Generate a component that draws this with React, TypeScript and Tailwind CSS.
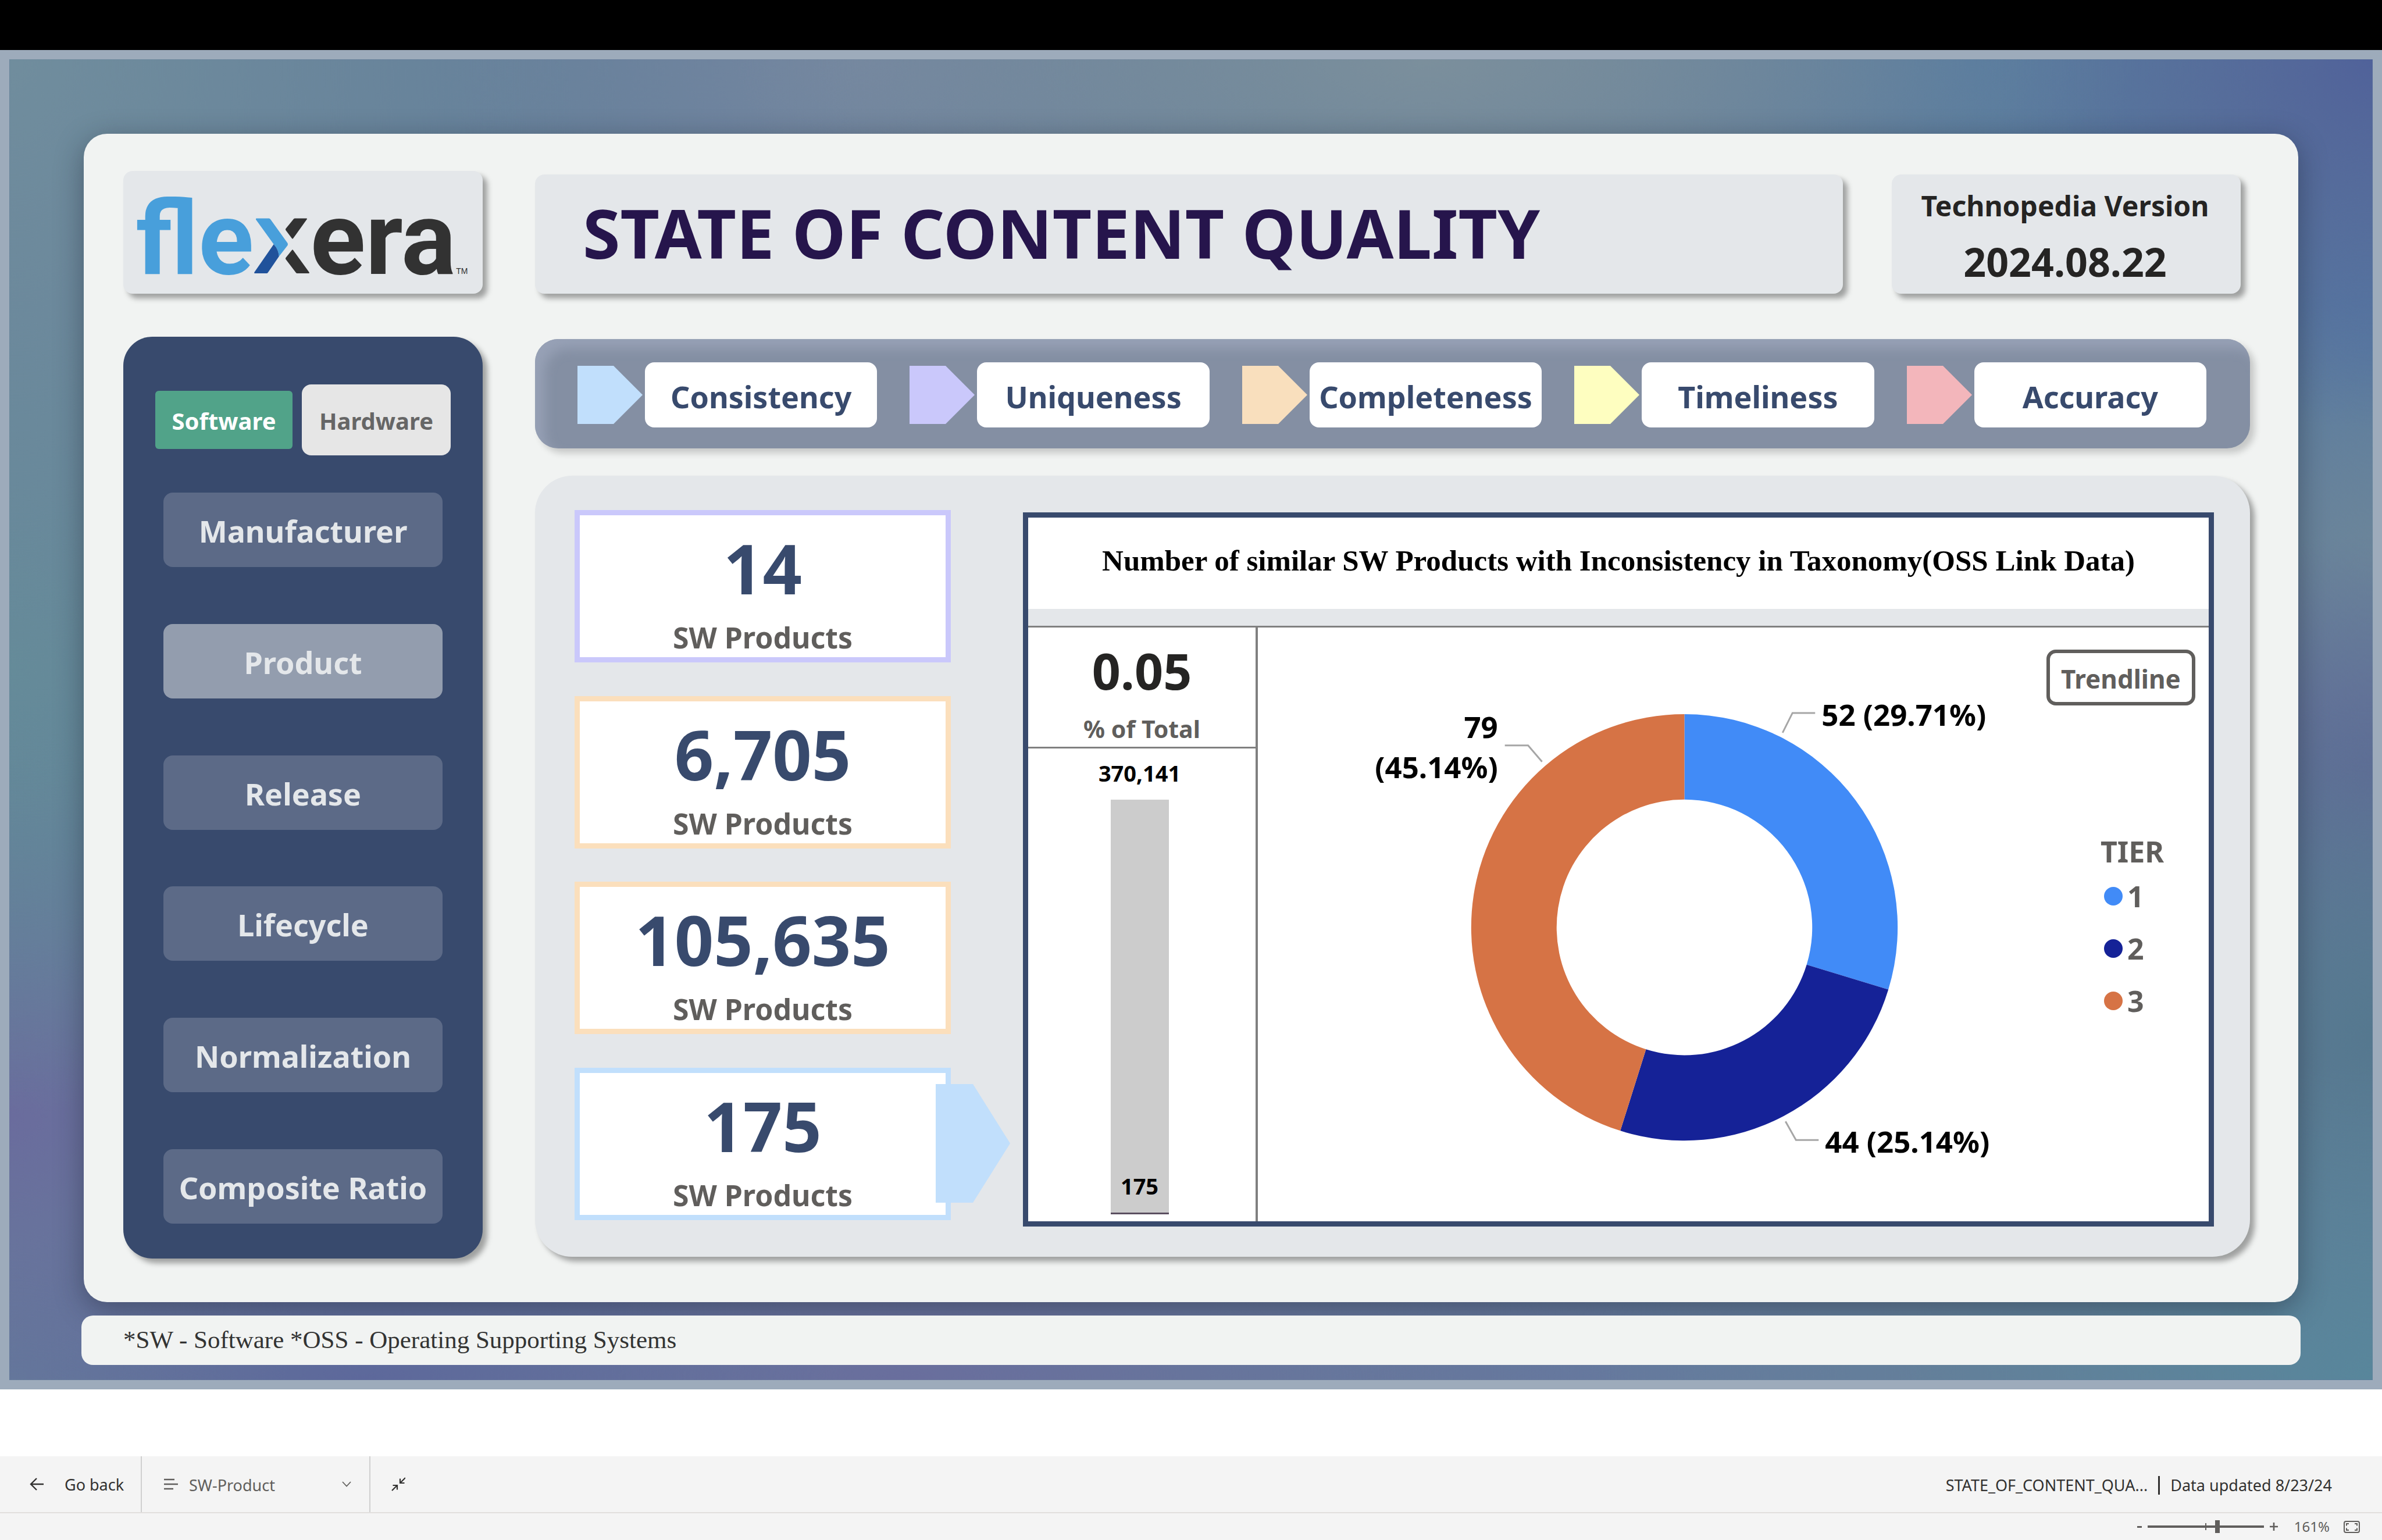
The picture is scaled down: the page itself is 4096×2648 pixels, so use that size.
import React from 'react';
import clsx from 'clsx';

const sans = "font-['Noto_Sans','Open_Sans',sans-serif]";
const serif = "font-['Liberation_Serif',serif]";
const cardShadow = 'shadow-[8px_8px_10px_rgba(0,0,0,0.34)]';

const dimensions = [
  { name: 'Consistency', arrow: 'fill-[#c1dffc]' },
  { name: 'Uniqueness', arrow: 'fill-[#cac8fb]' },
  { name: 'Completeness', arrow: 'fill-[#f9dfbd]' },
  { name: 'Timeliness', arrow: 'fill-[#fefec0]' },
  { name: 'Accuracy', arrow: 'fill-[#f3b6bb]' },
];

const sections = ['Manufacturer', 'Product', 'Release', 'Lifecycle', 'Normalization', 'Composite Ratio'];

const metrics = [
  { value: '14', border: 'border-[#cac8fb]' },
  { value: '6,705', border: 'border-[#fbdfbc]' },
  { value: '105,635', border: 'border-[#fbdfbc]' },
  { value: '175', border: 'border-[#c1dffc]', active: true },
];

const tiers = [
  { name: '1', count: 52, fill: 'fill-[#418bf7]', dot: 'bg-[#418bf7]' },
  { name: '2', count: 44, fill: 'fill-[#152297]', dot: 'bg-[#152297]' },
  { name: '3', count: 79, fill: 'fill-[#d67345]', dot: 'bg-[#d67345]' },
];

function Logo() {
  return (
    <div
      role="img"
      aria-label="flexera"
      className="flex items-baseline font-['Roboto',sans-serif] text-[176px] leading-[176px] font-bold"
    >
      <span className="text-[#489fdb]">fle</span>
      <svg viewBox="0 0 97 97" className="h-[97px] w-[97px]" aria-hidden="true">
        <path d="M5 1.5H26.5Q28 1.5 29 3L58.500 44Q59.500 46 58.500 48L43.700 67Q43 55 34.700 46L4 3.500Q3.500 1.500 5 1.500Z" fill="#489fdb" />
        <path d="M34.700 46Q43 55 43.700 67L24.500 95Q23.700 96 22.500 96H2Q.5 96 1.300 94.300Z" fill="#20529b" />
        <path d="M70.500 1.500H91Q92.500 1.500 91.700 3L68 36Q67 37.200 66 36L55.500 22Q54.500 20.500 55.500 19L69 2.500Z" fill="#323232" />
        <path d="M66 56Q67 54.500 68 56L95.700 94.300Q96.300 96 95 96H75Q73.700 96 73 95L55.500 72Q54.500 70.500 55.500 69Z" fill="#323232" />
      </svg>
      <span className="text-[#323232]">era</span>
      <span className="font-['Liberation_Sans',sans-serif] text-[14px] leading-4 font-normal text-[#323232]">TM</span>
    </div>
  );
}

function Pentagon({ className, shoulder = 62 }: { className: string; shoulder?: number }) {
  return (
    <svg viewBox="0 0 112 100" preserveAspectRatio="none" className={clsx('shrink-0', className)} aria-hidden="true">
      <path d={`M0 0H${shoulder}L112 50L${shoulder} 100H0Z`} />
    </svg>
  );
}

function Sidebar() {
  return (
    <aside className={clsx('mt-[74px] flex flex-1 flex-col rounded-[50px] bg-[#384a6d] pt-[82px] pb-[60px]', cardShadow)}>
      <div className="flex items-center justify-center gap-4">
        <button className="h-[100px] w-[236px] rounded-md bg-[#51a389] pt-1 text-[40px] font-bold text-white">Software</button>
        <button className="h-[122px] w-[256px] rounded-2xl bg-[#e6e6e6] pt-1 text-[40px] font-bold text-[#666666]">Hardware</button>
      </div>
      <nav className="mx-[69px] mt-16 flex flex-1 flex-col justify-between gap-6">
        {sections.map((name) => (
          <button
            key={name}
            aria-current={name === 'Product' ? 'page' : undefined}
            className={clsx(
              'h-32 rounded-2xl pt-1 text-[52px] font-bold whitespace-nowrap text-[#e4e7ea]',
              name === 'Product' ? 'bg-[#939dae]' : 'bg-[#5c6a87]',
            )}
          >
            {name}
          </button>
        ))}
      </nav>
    </aside>
  );
}

function polar(cx: number, cy: number, r: number, fraction: number) {
  const a = fraction * 2 * Math.PI;
  return `${(cx + r * Math.sin(a)).toFixed(1)} ${(cy - r * Math.cos(a)).toFixed(1)}`;
}

function TierDonut() {
  const cx = 734;
  const cy = 516;
  const outer = 367;
  const inner = 220;
  const total = tiers.reduce((sum, t) => sum + t.count, 0);
  let start = 0;
  return (
    <svg viewBox="0 0 1300 1022" className="min-w-0 flex-1" role="img" aria-label="SW products by tier">
      {tiers.map((t) => {
        const from = start / total;
        start += t.count;
        const to = start / total;
        return (
          <path
            key={t.name}
            className={t.fill}
            d={`M${polar(cx, cy, outer, from)}A${outer} ${outer} 0 0 1 ${polar(cx, cy, outer, to)}L${polar(cx, cy, inner, to)}A${inner} ${inner} 0 0 0 ${polar(cx, cy, inner, from)}Z`}
          />
        );
      })}
      <g fill="none" stroke="#a6a6a6" strokeWidth="3">
        <path d="M959 147H920L903 181" />
        <path d="M908 850L926 882H965" />
        <path d="M425 203H465L489 231" />
      </g>
      <g className="fill-black text-[51px] font-bold">
        <text x="970" y="169">52 (29.71%)</text>
        <text x="976" y="904">44 (25.14%)</text>
        <text x="413" y="190" textAnchor="end">79</text>
        <text x="413" y="259" textAnchor="end">(45.14%)</text>
      </g>
    </svg>
  );
}

function ChartPanel() {
  return (
    <section className="mt-1 mb-[52px] flex flex-1 flex-col border-[9px] border-[#384a6d] bg-white">
      <h2 className={clsx('flex h-[157px] items-center justify-center pb-2 text-[51px] font-bold text-black', serif)}>
        Number of similar SW Products with Inconsistency in Taxonomy(OSS Link Data)
      </h2>
      <div className="h-8 border-b-[3px] border-[#808080] bg-[#e4e7ea]" />
      <div className="flex flex-1">
        <div className="flex w-[395px] flex-col border-r-4 border-[#808080]">
          <div className="flex h-[208px] flex-col items-center border-b-[3px] border-[#808080] pt-[26px]">
            <div className="text-[86px] leading-[96px] font-bold text-[#252423]">0.05</div>
            <div className="mt-6 text-[41px] leading-[56px] font-bold text-[#605e5c]">% of Total</div>
          </div>
          <div className="flex flex-1 flex-col items-center pt-[18px] pr-2 pb-3 text-[38px] leading-[48px] font-bold text-black">
            <div>370,141</div>
            <div className="mt-[22px] flex w-[100px] flex-1 items-end justify-center border-b-[3px] border-[#5b4f60] bg-[#cccccc] pb-[22px]">175</div>
          </div>
        </div>
        <TierDonut />
        <div className="flex w-[336px] flex-col">
          <button className="mt-[38px] mr-[23px] h-24 w-64 self-end rounded-2xl border-[6px] border-[#605e5c] bg-white pt-1 text-[44px] leading-[64px] font-bold text-[#605e5c]">
            Trendline
          </button>
          <div className="mt-[219px] ml-[150px] text-[50px] font-bold text-[#605e5c]">
            <h3 className="leading-[64px]">TIER</h3>
            <ul>
              {tiers.map((t) => (
                <li key={t.name} className="flex h-[90px] items-center gap-2 pl-1.5">
                  <span className={clsx('size-8 rounded-full', t.dot)} />
                  {t.name}
                </li>
              ))}
            </ul>
          </div>
        </div>
      </div>
    </section>
  );
}

function ReportFooter() {
  return (
    <footer className="bg-[#f4f4f4] text-[27px] text-[#323130]">
      <div className="flex h-[98px] items-stretch border-b-2 border-[#e1dfdd]">
        <button className="flex w-[244px] items-center border-r-2 border-[#d0d0d0] pl-[51px]">
          <svg viewBox="0 0 24 22" className="h-[22px] w-6" fill="none" stroke="currentColor" strokeWidth="2.4" aria-hidden="true">
            <path d="M24 11H2M12 1L2 11L12 21" />
          </svg>
          <span className="ml-9 pt-0.5">Go back</span>
        </button>
        <div className="relative flex w-[393px] items-center border-r-2 border-[#d0d0d0] pl-[38px] text-[#605e5c]">
          <svg viewBox="0 0 24 20" className="h-5 w-6" fill="none" stroke="currentColor" strokeWidth="2.4" aria-hidden="true">
            <path d="M0 2H18M0 10H24M0 18H16" />
          </svg>
          <select aria-label="Report page" defaultValue="SW-Product" className="ml-[19px] h-full flex-1 appearance-none bg-transparent pt-1">
            <option>SW-Product</option>
          </select>
          <svg viewBox="0 0 16 10" className="pointer-events-none absolute right-[31px] h-2.5 w-4" fill="none" stroke="currentColor" strokeWidth="1.800" aria-hidden="true">
            <path d="M1 1L8 8.500L15 1" />
          </svg>
        </div>
        <button aria-label="Exit full screen" className="pl-9">
          <svg viewBox="0 0 24 24" className="size-6" fill="none" stroke="currentColor" strokeWidth="2.200" aria-hidden="true">
            <path d="M24 1L15.500 9.500M15 2.500V10H22.500M1 23L9.500 14.500M2.500 14H10V21.500" />
          </svg>
        </button>
        <div className="ml-auto flex items-center pt-1 pr-[86px]">
          <span>STATE_OF_CONTENT_QUA...</span>
          <span className="mx-[18px] h-8 w-[3px] bg-[#323130]" />
          <span>Data updated 8/23/24</span>
        </div>
      </div>
      <div className="flex h-[46px] items-center justify-end pr-[38px] text-[24px] text-[#605e5c]">
        <button aria-label="Zoom out" className="flex h-8 items-center">
          <span className="h-[3px] w-2 bg-[#605e5c]" />
        </button>
        <div className="relative mx-2.5 flex h-8 w-[200px] items-center">
          <span className="absolute left-[99px] h-3 w-0.5 bg-[#605e5c]" />
          <input
            type="range"
            aria-label="Zoom"
            min={0}
            max={266}
            defaultValue={161}
            className="h-1 w-full appearance-none bg-[#605e5c] [&::-webkit-slider-thumb]:h-[22px] [&::-webkit-slider-thumb]:w-2 [&::-webkit-slider-thumb]:appearance-none [&::-webkit-slider-thumb]:bg-[#605e5c]"
          />
        </div>
        <button aria-label="Zoom in" className="flex h-8 items-center">
          <svg viewBox="0 0 14 14" className="size-3.5" stroke="currentColor" strokeWidth="2.600" aria-hidden="true">
            <path d="M0 7H14M7 0V14" />
          </svg>
        </button>
        <span className="ml-[28px]">161%</span>
        <button aria-label="Fit to page" className="ml-6">
          <svg viewBox="0 0 28 21" className="h-[21px] w-7" fill="none" stroke="currentColor" strokeWidth="2" aria-hidden="true">
            <rect x="1" y="1" width="26" height="19" rx="3" />
            <path d="M9 5H5V8.500M5 12.500V16H9M19 5H23V8.500M23 12.500V16H19" />
          </svg>
        </button>
      </div>
    </footer>
  );
}

export default function App() {
  return (
    <div className={clsx('flex min-h-screen flex-col bg-white', sans)}>
      <div className="h-[86px] bg-black" />
      <div className="flex flex-1 flex-col bg-[#9dabbb] p-4">
        <div className="flex flex-1 flex-col bg-[#647f9a] bg-[radial-gradient(ellipse_30%_22%_at_60%_0%,#7b8f9c,transparent),radial-gradient(ellipse_16%_28%_at_100%_0%,#50629a,transparent),radial-gradient(ellipse_16%_30%_at_83%_0%,#54799f,transparent),radial-gradient(ellipse_18%_26%_at_36%_0%,#7486a0,transparent),radial-gradient(ellipse_26%_60%_at_0%_0%,#708d9d,transparent),radial-gradient(ellipse_16%_34%_at_0%_46%,#628a98,transparent),radial-gradient(ellipse_18%_26%_at_0%_80%,#6a6c9d,transparent),radial-gradient(ellipse_20%_16%_at_15%_100%,#5d689b,transparent),radial-gradient(ellipse_34%_26%_at_38%_100%,#696e9d,transparent),radial-gradient(ellipse_16%_18%_at_66%_100%,#657a9e,transparent),radial-gradient(ellipse_20%_24%_at_100%_100%,#58869b,transparent),radial-gradient(ellipse_12%_26%_at_100%_74%,#55788f,transparent),radial-gradient(ellipse_12%_18%_at_100%_54%,#5f6b96,transparent),radial-gradient(ellipse_12%_20%_at_100%_38%,#6b859a,transparent),radial-gradient(ellipse_12%_20%_at_100%_22%,#5579a2,transparent)] px-[124px] pt-32 pb-[26px]">
          <main className="mx-1 flex flex-1 rounded-[40px] bg-[#f1f3f2] pt-16 pr-[83px] pb-[75px] pl-[68px] shadow-[0_12px_50px_rgba(20,25,40,0.4)]">
            <div className="flex w-[618px] shrink-0 flex-col">
              <div className={clsx('flex h-[211px] items-end justify-center rounded-2xl bg-[#e4e7ea] pr-1 pb-1.5', cardShadow)}>
                <Logo />
              </div>
              <Sidebar />
            </div>
            <div className="mt-1.5 mb-[3px] ml-[90px] flex min-w-0 flex-1 flex-col">
              <header className="mr-4 flex h-[205px] gap-[84px]">
                <div className={clsx('flex flex-1 items-center rounded-2xl bg-[#e4e7ea] pb-1.5 pl-[82px]', cardShadow)}>
                  <h1 className="text-[117px] leading-[128px] font-bold whitespace-nowrap text-[#26154c]">STATE OF CONTENT QUALITY</h1>
                </div>
                <div className={clsx('flex w-[600px] flex-col items-center rounded-2xl bg-[#e4e7ea] pt-[22px] pr-1 font-bold text-[#252423]', cardShadow)}>
                  <div className="text-[48px] leading-[64px]">Technopedia Version</div>
                  <div className="mt-5 text-[68px] leading-[88px]">2024.08.22</div>
                </div>
              </header>
              <div className="mt-[78px] flex h-[188px] items-center gap-[56px] rounded-[40px] bg-[#848fa3] pt-1 pr-[75px] pl-[73px] shadow-[inset_16px_16px_20px_#97a1b6,8px_8px_12px_rgba(0,0,0,0.18)]">
                {dimensions.map((d) => (
                  <div key={d.name} className="flex flex-1 items-center gap-1">
                    <Pentagon className={clsx('h-[100px] w-[112px]', d.arrow)} />
                    <button className="h-28 flex-1 rounded-2xl bg-white pt-1.5 text-[52px] font-bold text-[#384a6d]">{d.name}</button>
                  </div>
                ))}
              </div>
              <div className={clsx('mt-[47px] flex flex-1 rounded-[64px] bg-[#e4e7ea] pt-[59px] pr-[62px] pl-[68px]', cardShadow)}>
                <div className="mr-[124px] mb-[63px] flex w-[647px] flex-col justify-between gap-6">
                  {metrics.map((m) => (
                    <div key={m.value} className={clsx('relative h-[262px] border-[9px] bg-white pt-[27px] text-center font-bold', m.border)}>
                      <div className="text-[118px] leading-[128px] text-[#384a6d]">{m.value}</div>
                      <div className="mt-[23px] text-[50px] leading-[64px] text-[#605e5c]">SW Products</div>
                      {m.active && <Pentagon shoulder={56} className="absolute top-[19px] -right-[111px] h-[204px] w-32 fill-[#c1dffc]" />}
                    </div>
                  ))}
                </div>
                <ChartPanel />
              </div>
            </div>
          </main>
          <div className={clsx('relative mt-[23px] flex h-[85px] items-center rounded-[20px] bg-[#f1f3f2] pl-[72px] text-[43px] text-[#333333]', serif)}>
            *SW - Software *OSS - Operating Supporting Systems
          </div>
        </div>
      </div>
      <div className="h-[115px] bg-white" />
      <ReportFooter />
    </div>
  );
}
